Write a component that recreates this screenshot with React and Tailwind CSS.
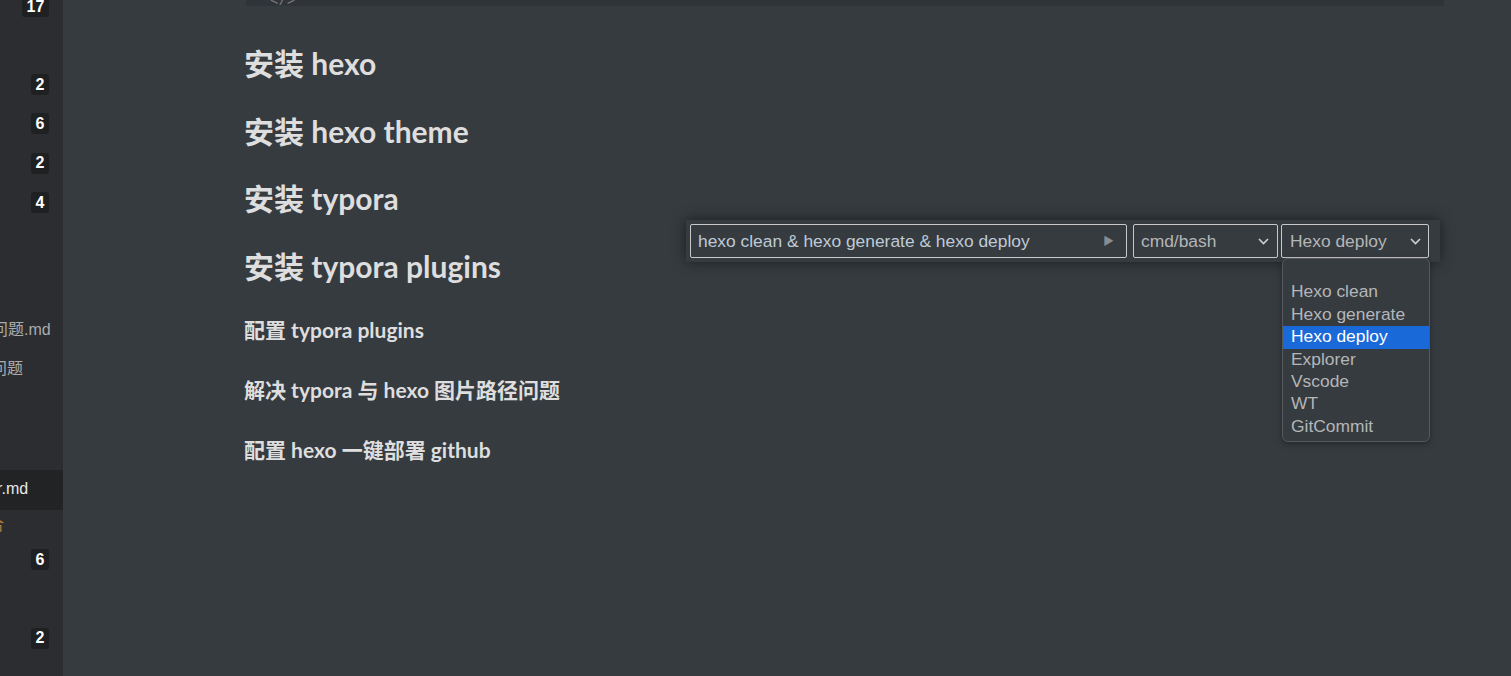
import React from "react";

const headingFont = {
  fontFamily: '"Lato", "Noto Sans CJK SC", sans-serif',
};

const Badge = ({ n, wide }) => (
  <span
    className={`flex h-[21px] items-center justify-center rounded-[3px] bg-[#1f2022] text-[16px] font-bold text-white ${
      wide ? "w-[27px]" : "w-[18px]"
    }`}
  >
    {n}
  </span>
);

const Chevron = () => (
  <svg width="11" height="7" viewBox="0 0 11 7" fill="none">
    <path d="M1 1l4.5 4.5L10 1" stroke="#d0d0d0" strokeWidth="1.6" />
  </svg>
);

const options = ["", "Hexo clean", "Hexo generate", "Hexo deploy", "Explorer", "Vscode", "WT", "GitCommit"];

const h2s = ["hexo", "hexo theme", "typora", "typora plugins"];

const App = () => {
  return (
    <div
      className="flex h-[676px] w-[1511px] overflow-hidden bg-[#363b40]"
      style={{ fontFamily: '"Liberation Sans", "Noto Sans CJK SC", sans-serif' }}
    >
      {/* sidebar, scrolled off to the left */}
      <aside className="flex w-[63px] shrink-0 flex-col overflow-hidden bg-[#2c2d30]">
        <div className="-mt-[13px] flex h-[39px] shrink-0 items-center justify-end pr-[14px]">
          <Badge n="17" wide />
        </div>
        <div className="h-[39px] shrink-0" />
        <div className="flex h-[39px] shrink-0 items-center justify-end pr-[14px]">
          <Badge n="2" />
        </div>
        <div className="flex h-[39px] shrink-0 items-center justify-end pr-[14px]">
          <Badge n="6" />
        </div>
        <div className="flex h-[40px] shrink-0 items-center justify-end pr-[14px]">
          <Badge n="2" />
        </div>
        <div className="flex h-[39px] shrink-0 items-center justify-end pr-[14px]">
          <Badge n="4" />
        </div>
        <div className="h-[88px] shrink-0" />
        <div className="flex h-[40px] shrink-0 items-center whitespace-nowrap text-[16px] text-[#a9abad]">
          <span className="-ml-[8px]">问题.md</span>
        </div>
        <div className="flex h-[38px] shrink-0 items-center whitespace-nowrap text-[16px] text-[#a9abad]">
          <span className="-ml-[9px]">问题</span>
        </div>
        <div className="h-[82px] shrink-0" />
        <div className="flex h-[40px] shrink-0 items-center whitespace-nowrap bg-[#222324] text-[16px] text-[#e8e8e8]">
          <span className="-ml-[3px] -mt-[3px]">r.md</span>
        </div>
        <div className="flex h-[30px] shrink-0 items-center whitespace-nowrap text-[15px] text-[#b9803f]">
          <span className="-ml-[11px]">合</span>
        </div>
        <div className="flex h-[39px] shrink-0 items-center justify-end pr-[14px]">
          <Badge n="6" />
        </div>
        <div className="h-[39px] shrink-0" />
        <div className="flex h-[40px] shrink-0 items-center justify-end pr-[14px]">
          <Badge n="2" />
        </div>
      </aside>

      {/* editor */}
      <main className="relative flex-1">
        <div className="ml-[183px] mr-[67px] h-[6px] overflow-hidden bg-[#303438]">
          <div className="-mt-[9px] pl-[24px] font-mono text-[14px] text-[#7a7e82]">&lt;/&gt;</div>
        </div>

        <div className="pl-[181px] text-[#dedede]" style={headingFont}>
          <div className="mt-[37px] flex flex-col gap-[27.7px]">
            {h2s.map((t) => (
              <h2 key={t} className="h-[40px] text-[30px] font-bold leading-[40px]">
                安装 {t}
              </h2>
            ))}
          </div>
          <div className="mt-[29px] flex flex-col gap-[30px]">
            <h3 className="h-[30px] text-[21px] font-bold leading-[30px]">配置 typora plugins</h3>
            <h3 className="h-[30px] text-[21px] font-bold leading-[30px]">解决 typora 与 hexo 图片路径问题</h3>
            <h3 className="h-[30px] text-[21px] font-bold leading-[30px]">配置 hexo 一键部署 github</h3>
          </div>
        </div>

        {/* floating command toolbar */}
        <div className="absolute left-[623px] top-[220px] flex items-start bg-[#363b40] p-[4px] pr-[11px] shadow-[0_0_14px_rgba(0,0,0,0.5)]">
          <div className="flex h-[34px] w-[437px] items-center justify-between rounded-[2px] border border-[#c9c9c9] pl-[7px] pr-[12px] text-[17.4px] text-[#bfcad6]">
            <span>hexo clean &amp; hexo generate &amp; hexo deploy</span>
            <span className="text-[11px] text-[#8a8d90]">▶</span>
          </div>
          <div className="ml-[6px] flex h-[34px] w-[145px] items-center justify-between rounded-[2px] border border-[#c9c9c9] pl-[7px] pr-[8px] text-[17.4px] text-[#b4b6b8]">
            <span>cmd/bash</span>
            <Chevron />
          </div>
          <div className="relative ml-[3px] flex h-[34px] w-[148px] items-center justify-between rounded-[2px] border border-[#c9c9c9] pl-[8px] pr-[7px] text-[17.4px] text-[#b4b6b8]">
            <span>Hexo deploy</span>
            <Chevron />
            <ul className="absolute left-0 top-[33px] w-[148px] rounded-[6px] border border-[#55595d] bg-[#363b40] pb-[3px] shadow-[0_2px_6px_rgba(0,0,0,0.35)]">
              {options.map((o, i) => (
                <li
                  key={i}
                  className={`h-[22.4px] pl-[8px] text-[17.4px] leading-[21px] ${
                    o === "Hexo deploy" ? "bg-[#1a69d9] text-white" : "text-[#b4b6b8]"
                  }`}
                >
                  {o}
                </li>
              ))}
            </ul>
          </div>
        </div>
      </main>
    </div>
  );
};

export default App;
